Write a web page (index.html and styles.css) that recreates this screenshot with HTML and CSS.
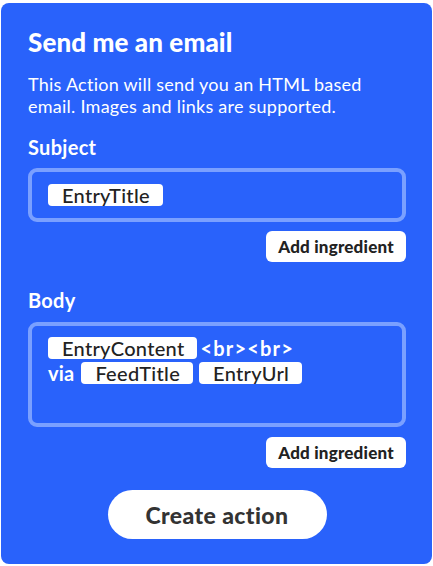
FILE: index.html
```html
<!DOCTYPE html>
<html>
<head>
<meta charset="utf-8">
<link rel="stylesheet" href="styles.css">
</head>
<body>
<div class="card">
  <h1 class="title">Send me an email</h1>
  <p class="desc">This Action will send you an HTML based email. Images and links are supported.</p>

  <div class="field">
    <div class="label">Subject</div>
    <div class="box box-subject">
      <div class="line"><span class="pill">EntryTitle</span></div>
    </div>
    <div class="actions"><button class="add">Add ingredient</button></div>
  </div>

  <div class="field field-body">
    <div class="label">Body</div>
    <div class="box box-body">
      <div class="line"><span class="pill pill-first">EntryContent</span><span class="raw raw-br">&lt;br&gt;&lt;br&gt;</span></div>
      <div class="line"><span class="raw raw-via">via</span><span class="pill pill-mid">FeedTitle</span><span class="pill">EntryUrl</span></div>
    </div>
    <div class="actions"><button class="add">Add ingredient</button></div>
  </div>

  <div class="submit"><button class="create">Create action</button></div>
</div>
</body>
</html>
```

FILE: styles.css
```css
html, body {
  margin: 0;
  padding: 0;
  background: #ffffff;
}
body {
  font-family: Lato, "Noto Sans", sans-serif;
}
.card {
  margin: 3px 1px 2px 1px;
  height: 561px;
  box-sizing: border-box;
  background: #2962fb;
  border-radius: 8px;
  padding: 24px 26px 0 27px;
  color: #ffffff;
}
.title {
  margin: 0;
  font-size: 26px;
  font-weight: 900;
  line-height: 30px;
  letter-spacing: 0.1px;
}
.desc {
  margin: 16px 0 0 0;
  font-size: 18px;
  line-height: 22px;
  font-weight: 400;
  letter-spacing: 0.25px;
}
.field {
  margin-top: 18px;
}
.field-body {
  margin-top: 26px;
}
.label {
  font-size: 20px;
  font-weight: 700;
  line-height: 24px;
  letter-spacing: 0.3px;
}
.box {
  margin-top: 9px;
  border: 4px solid #7aa0ff;
  border-radius: 9px;
  box-sizing: border-box;
  padding: 12px 16px 0 16px;
}
.field-body .box {
  margin-top: 10px;
}
.box-subject {
  height: 54px;
}
.box-body {
  height: 105px;
  padding-top: 11px;
  display: flex;
  flex-direction: column;
  gap: 3px;
}
.line {
  display: flex;
  align-items: center;
  height: 22px;
}
.pill {
  background: #ffffff;
  color: #222222;
  border-radius: 4px;
  font-size: 20px;
  font-weight: 500;
  line-height: 22px;
  height: 22px;
  padding: 0 13px 0 14px;
  letter-spacing: 0.3px;
}
.pill-first {
  margin-right: 3px;
}
.pill-mid {
  margin-right: 6px;
}
.raw {
  font-size: 19px;
  font-weight: 700;
  color: #ffffff;
  line-height: 22px;
  letter-spacing: 0.2px;
}
.raw-br {
  font-size: 20px;
  letter-spacing: 1.2px;
}
.raw-via {
  font-size: 20px;
  margin-right: 7px;
}
.actions {
  display: flex;
  justify-content: flex-end;
  margin-top: 9px;
}
.field-body .actions {
  margin-top: 10px;
}
.add {
  background: #ffffff;
  color: #222222;
  border: none;
  border-radius: 6px;
  font-family: Lato, "Noto Sans", sans-serif;
  font-size: 17px;
  font-weight: 900;
  letter-spacing: 0.2px;
  height: 31px;
  width: 140px;
  padding: 0;
}
.submit {
  display: flex;
  justify-content: center;
  margin-top: 22px;
}
.create {
  background: #ffffff;
  color: #333333;
  border: none;
  border-radius: 25px;
  font-family: Lato, "Noto Sans", sans-serif;
  font-size: 23px;
  font-weight: 900;
  letter-spacing: 0.4px;
  height: 49px;
  width: 219px;
  padding: 0;
}
```
